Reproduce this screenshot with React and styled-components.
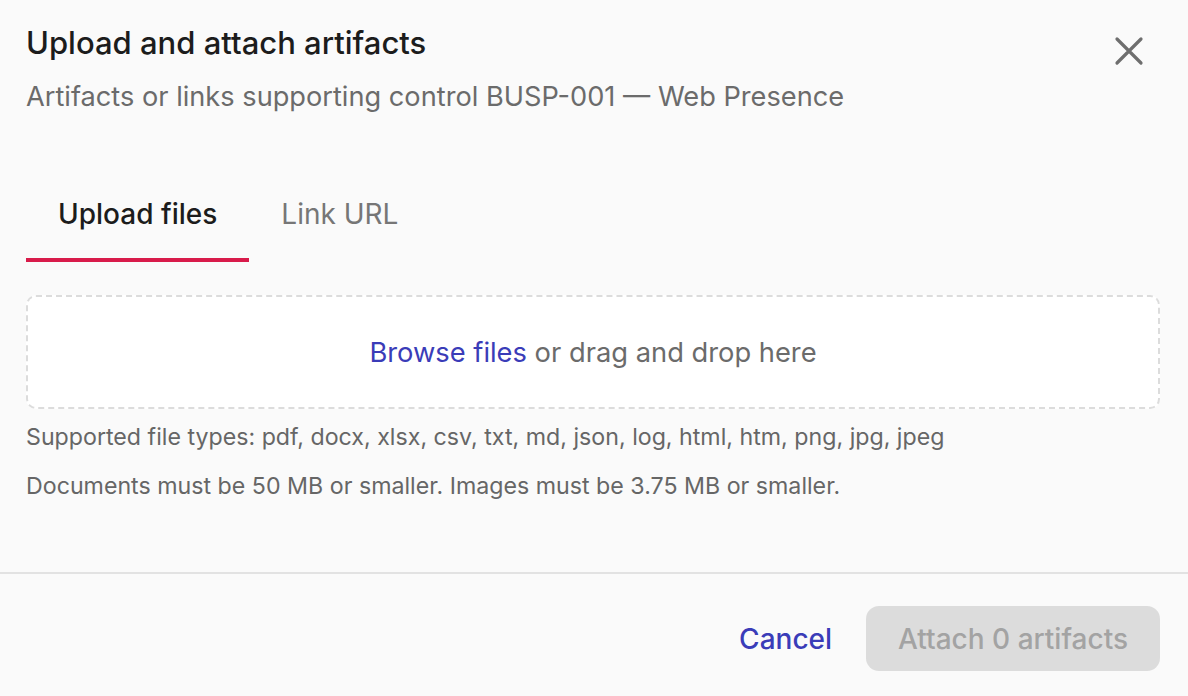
import React, { useState } from "react";
import styled, { createGlobalStyle } from "styled-components";

const GlobalStyle = createGlobalStyle`
  html, body {
    margin: 0;
    padding: 0;
    background: #fafafa;
  }
  body {
    font-family: Inter, "Noto Sans", "Liberation Sans", sans-serif;
    -webkit-font-smoothing: antialiased;
  }
`;

const Dialog = styled.div`
  width: 1188px;
  height: 696px;
  background: #fafafa;
  display: flex;
  flex-direction: column;
  box-sizing: border-box;
`;

const Body = styled.div`
  padding: 24px 28px 0 26px;
  flex: 1;
`;

const Header = styled.div`
  display: flex;
  justify-content: space-between;
  align-items: flex-start;
`;

const Title = styled.h2`
  margin: 0;
  font-size: 31px;
  line-height: 38px;
  font-weight: 500;
  color: #1c1c1c;
`;

const Subtitle = styled.p`
  margin: 17px 0 0;
  font-size: 27.2px;
  line-height: 36px;
  color: #6b6b6b;
`;

const CloseButton = styled.button`
  border: none;
  background: none;
  padding: 0;
  margin: 12px 16px 0 0;
  width: 30px;
  height: 30px;
  display: flex;
  align-items: center;
  justify-content: center;
  cursor: pointer;
`;

const TabList = styled.div`
  display: flex;
  margin-top: 64px;
`;

const Tab = styled.button`
  border: none;
  background: none;
  padding: 17px 32px 26px;
  font-family: inherit;
  font-size: 28px;
  line-height: 36px;
  font-weight: ${(p) => (p.$active ? 500 : 400)};
  color: ${(p) => (p.$active ? "#1c1c1c" : "#767676")};
  border-bottom: 4px solid ${(p) => (p.$active ? "#d81b4a" : "transparent")};
  cursor: pointer;
`;

const DropZone = styled.div`
  margin-top: 33px;
  height: 114px;
  box-sizing: border-box;
  background: #fff;
  border: 2px dashed #dcdcdc;
  border-radius: 10px;
  display: flex;
  align-items: center;
  justify-content: center;
  font-size: 27.3px;
  color: #6b6b6b;
`;

const BrowseLink = styled.span`
  color: #3a3cb8;
  cursor: pointer;
`;

const Hint = styled.p`
  margin: ${(p) => (p.$first ? "13px" : "19px")} 0 0;
  font-size: 23.2px;
  line-height: 30px;
  color: #666;
`;

const Footer = styled.div`
  border-top: 2px solid #e2e2e2;
  height: 124px;
  box-sizing: border-box;
  padding: 32px 28px 0 26px;
  display: flex;
  justify-content: flex-end;
  align-items: flex-start;
  gap: 34px;
`;

const CancelButton = styled.button`
  border: none;
  background: none;
  padding: 0;
  height: 65px;
  font-family: inherit;
  font-size: 28px;
  font-weight: 500;
  color: #3a3cb8;
  cursor: pointer;
`;

const AttachButton = styled.button`
  border: none;
  height: 65px;
  padding: 0 32px;
  border-radius: 13px;
  background: #dcdcdc;
  font-family: inherit;
  font-size: 28px;
  font-weight: 500;
  color: #a3a3a3;
  cursor: not-allowed;
`;

function CloseIcon() {
  return (
    <svg width="30" height="30" viewBox="0 0 30 30" fill="none">
      <path d="M3 3 L27 27 M27 3 L3 27" stroke="#6e6e6e" strokeWidth="3.2" strokeLinecap="round" />
    </svg>
  );
}

export default function App() {
  const [tab, setTab] = useState("upload");
  const count = 0;

  return (
    <>
      <GlobalStyle />
      <Dialog>
        <Body>
          <Header>
            <div>
              <Title>Upload and attach artifacts</Title>
              <Subtitle>Artifacts or links supporting control BUSP-001 — Web Presence</Subtitle>
            </div>
            <CloseButton aria-label="Close">
              <CloseIcon />
            </CloseButton>
          </Header>

          <TabList>
            <Tab $active={tab === "upload"} onClick={() => setTab("upload")}>Upload files</Tab>
            <Tab $active={tab === "link"} onClick={() => setTab("link")}>Link URL</Tab>
          </TabList>

          <DropZone>
            <span>
              <BrowseLink>Browse files</BrowseLink> or drag and drop here
            </span>
          </DropZone>

          <Hint $first>Supported file types: pdf, docx, xlsx, csv, txt, md, json, log, html, htm, png, jpg, jpeg</Hint>
          <Hint>Documents must be 50 MB or smaller. Images must be 3.75 MB or smaller.</Hint>
        </Body>

        <Footer>
          <CancelButton>Cancel</CancelButton>
          <AttachButton disabled>Attach {count} artifacts</AttachButton>
        </Footer>
      </Dialog>
    </>
  );
}
